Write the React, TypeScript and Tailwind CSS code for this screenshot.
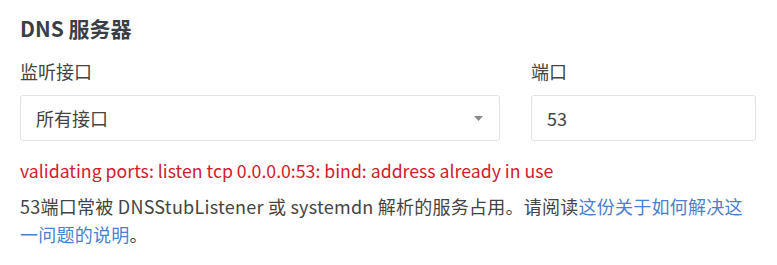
export default function App() {
  return (
    <div
      className="bg-white px-[20px] pr-[21px] pt-[14px] pb-4 text-[#444]"
      style={{ fontFamily: '"Noto Sans CJK SC", "Noto Sans", sans-serif' }}
    >
      <h2 className="text-[21px] leading-[28px] font-bold text-[#3a3f47]">DNS 服务器</h2>

      <div className="mt-[15px] flex gap-[31px]">
        <div className="w-[480px] shrink-0">
          <label className="block text-[18px] leading-[28px] text-[#444]">监听接口</label>
          <div className="mt-[10px] flex h-[46px] items-center justify-between rounded-[3px] border border-[#e3e3e3] bg-white pl-[15px] pr-[16px]">
            <span className="text-[18px] text-[#444]">所有接口</span>
            <svg width="9" height="5" viewBox="0 0 9 5" className="fill-[#8a8a8a]">
              <path d="M0 0h9L4.5 5z" />
            </svg>
          </div>
        </div>
        <div className="min-w-0 flex-1">
          <label className="block text-[18px] leading-[28px] text-[#444]">端口</label>
          <div className="mt-[10px] flex h-[46px] items-center rounded-[3px] border border-[#e3e3e3] bg-white px-[15px]">
            <span className="text-[18px] text-[#444]">53</span>
          </div>
        </div>
      </div>

      <p className="mt-[16px] text-[17.7px] leading-[26px] text-[#d0202e]">
        validating ports: listen tcp 0.0.0.0:53: bind: address already in use
      </p>
      <p className="mt-[9px] text-[18px] leading-[28px] tracking-[0.25px] text-[#444]">
        53端口常被 DNSStubListener 或 systemdn 解析的服务占用。请阅读
        <a href="#" className="text-[#4a80cf]">这份关于如何解决这一问题的说明</a>。
      </p>
    </div>
  )
}
